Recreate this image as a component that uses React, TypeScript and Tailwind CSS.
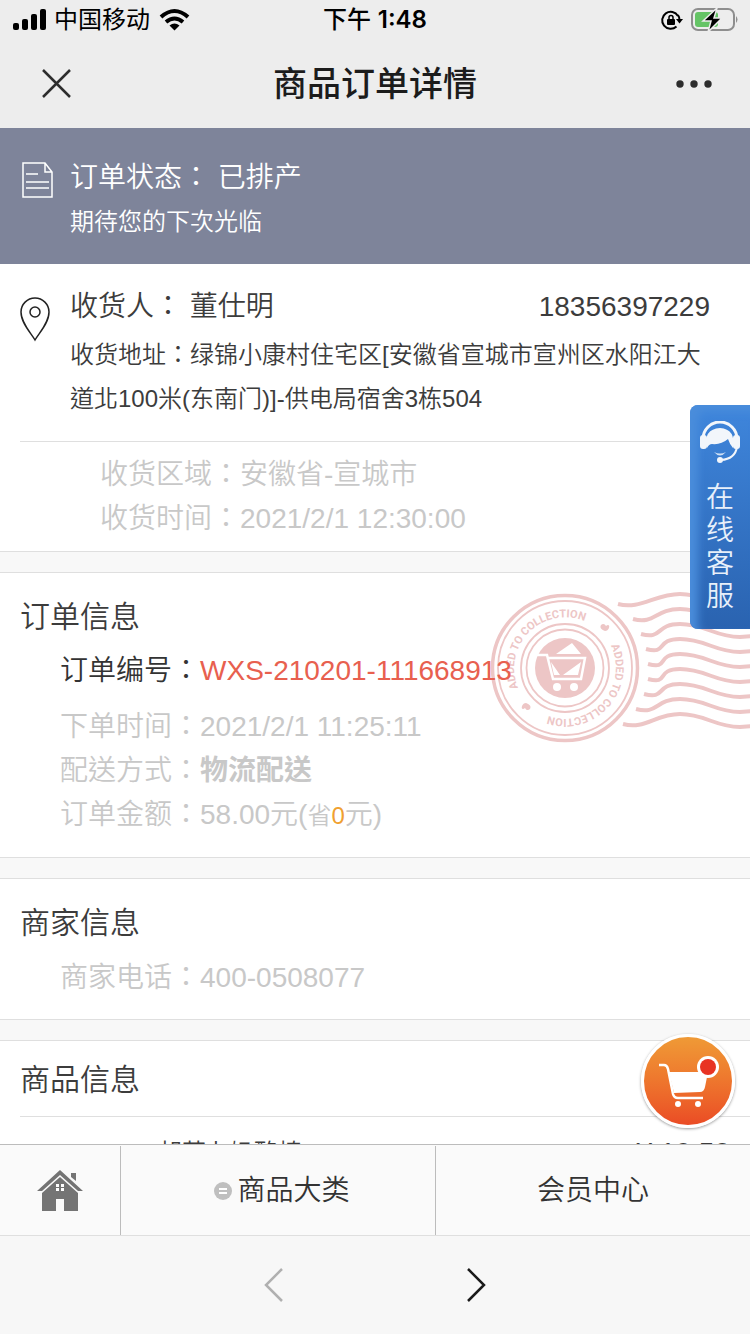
import React from 'react';

type RowProps = {
  label: string;
  children: React.ReactNode;
};

function Row({ label, children }: RowProps) {
  return (
    <div className="flex text-[28px] leading-[44px]">
      <dt>{label}：</dt>
      <dd>{children}</dd>
    </div>
  );
}

function StatusBar() {
  return (
    <div className="grid h-10 grid-cols-3 items-center px-3 text-2xl text-black">
      <div className="flex items-center gap-2">
        <svg width="34" height="22" viewBox="0 0 34 22" aria-hidden="true">
          <rect x="1" y="14" width="6" height="7" rx="2" />
          <rect x="10" y="10" width="6" height="11" rx="2" />
          <rect x="19" y="5" width="6" height="16" rx="2" />
          <rect x="28" y="0" width="6" height="21" rx="2" />
        </svg>
        <span className="whitespace-nowrap">中国移动</span>
        <svg width="32" height="24" viewBox="0 0 32 24" aria-hidden="true">
          <path d="M3 9 Q16.5 -3 30 9" fill="none" stroke="#000" strokeWidth="4" />
          <path d="M8 14 Q16.5 7 25 14" fill="none" stroke="#000" strokeWidth="4" />
          <path d="M16.5 22.5 L11.5 17.5 Q16.5 13.5 21.5 17.5 Z" />
        </svg>
      </div>
      <div className="text-center font-medium">
        下午 <span className="font-['Inter',sans-serif] font-semibold">1:48</span>
      </div>
      <div className="flex items-center justify-end gap-2">
        <svg width="24" height="24" viewBox="0 0 24 24" aria-hidden="true">
          <path d="M19 8 A8.5 8.5 0 1 0 17.5 18.5" fill="none" stroke="#000" strokeWidth="2" />
          <path d="M19 7 Q20.5 9 20.5 12" fill="none" stroke="#000" strokeWidth="2" />
          <path d="M17 11 H24 L20.5 15.5 Z" />
          <rect x="8" y="11" width="8" height="6" rx="1" />
          <path d="M10 11 V9.5 A2 2 0 0 1 14 9.5 V11" fill="none" stroke="#000" strokeWidth="1.5" />
        </svg>
        <svg width="47" height="26" viewBox="0 0 47 26" aria-hidden="true">
          <rect x="1" y="2" width="42" height="21" rx="6" fill="none" stroke="#8e8e8e" strokeWidth="2" />
          <path d="M45 9 Q48 12.5 45 16 Z" fill="#8e8e8e" />
          <rect x="4" y="5" width="23" height="15" rx="3" fill="#65c466" />
          <path d="M26 1 L12 14 H20 L17 25 L31 11 H23 Z" fill="#000" stroke="#ededed" strokeWidth="1.5" />
        </svg>
      </div>
    </div>
  );
}

// left end of each postmark wave, from the top one down
const waves = [128, 143, 151, 156, 158, 158, 154, 146, 133];

function Stamp() {
  return (
    <svg className="absolute top-4 right-0" width="260" height="160" viewBox="0 0 260 160" fill="none" stroke="#edc6c6" aria-hidden="true">
      <circle cx="75" cy="79" r="72.5" strokeWidth="3.5" />
      <circle cx="75" cy="79" r="67" strokeWidth="1.8" />
      <circle cx="75" cy="79" r="44" strokeWidth="1.8" />
      <circle cx="75" cy="79" r="38.5" strokeWidth="1.8" />
      <circle cx="75" cy="79" r="30" fill="#edc6c6" stroke="none" />
      <path d="M44 66 H57 L63 90 H91 L95 69 H58" stroke="#fff" strokeWidth="2.5" />
      <path d="M66 65 L82 54 L91 65 Z M61 73 L70 86 H64 Z M73 86 L91 73 L88 86 Z" fill="#fff" stroke="none" />
      <circle cx="67" cy="98" r="4" fill="#fff" stroke="none" />
      <circle cx="84" cy="98" r="4" fill="#fff" stroke="none" />
      <defs>
        <path id="ring-top" d="M28.1 98.9 A51 51 0 0 1 111 43" />
        <path id="ring-bottom" d="M120.8 56.6 A51 51 0 0 1 39 115" />
      </defs>
      <g fill="#edc6c6" stroke="none" className="font-['Roboto',sans-serif] text-[11px] font-bold">
        <text>
          <textPath href="#ring-top">ADDED TO COLLECTION</textPath>
        </text>
        <text>
          <textPath href="#ring-bottom">ADDED TO COLLECTION</textPath>
        </text>
        <path d="M115 42 C110 40 110 38 111 36 C113 34 115 35 116 37 C118 35 120 36 119 39 C118 41 117 42 115 42 Z" />
        <path d="M36 114 C41 116 41 118 40 120 C38 122 36 121 35 119 C33 121 31 120 32 117 C33 115 34 114 36 114 Z" />
      </g>
      {waves.map((x, i) => {
        const peak = 5 + i * 15;
        return (
          <path
            key={i}
            d={`M${x} ${peak + 10} C${x + 22} ${peak + 16} 165 ${peak} 190 ${peak} C215 ${peak} 225 ${peak + 13} 250 ${peak + 13} L262 ${peak + 12}`}
            strokeWidth="4"
          />
        );
      })}
    </svg>
  );
}

function ServiceTab() {
  return (
    <button
      type="button"
      className="absolute top-[277px] right-0 flex h-56 w-[60px] flex-col items-center rounded-l-lg bg-linear-to-b from-[#3f86dc] to-[#2a63b0] pt-4 text-[28px] leading-[33px] text-[#e8f0fa] shadow-[inset_8px_6px_8px_#4a8ddb]"
    >
      <svg width="42" height="44" viewBox="0 0 42 44" aria-hidden="true">
        <path d="M4 18 A17 17 0 0 1 38 18" fill="none" stroke="#f2f6fb" strokeWidth="3" />
        <rect x="1" y="14" width="7" height="14" rx="3" fill="#f2f6fb" />
        <rect x="34" y="14" width="7" height="14" rx="3" fill="#f2f6fb" />
        <path d="M8 27 Q4 8 21 7 Q37 8 34 27 Q31 24 29 18 Q22 24 13 23 Q10 23 8 27 Z" fill="#f2f6fb" />
        <path d="M38 26 Q36 38 22 39" fill="none" stroke="#f2f6fb" strokeWidth="2" />
        <path d="M15 31 Q21 34 27 31 Q21 38 15 31 Z" fill="#cfe0f5" />
        <circle cx="21" cy="39" r="3" fill="#f2f6fb" />
      </svg>
      <span className="mt-4 w-7">在线客服</span>
    </button>
  );
}

function CartButton() {
  return (
    <button
      type="button"
      aria-label="购物车"
      className="absolute right-[15px] bottom-4 flex h-[94px] w-[94px] items-center justify-center rounded-full border-[3px] border-white bg-linear-to-b from-[#ef9a36] to-[#ea4b25] shadow-[0_1px_3px_rgba(0,0,0,0.4)]"
    >
      <svg width="88" height="88" viewBox="0 0 88 88" className="shrink-0" aria-hidden="true">
        <path d="M15 28 H20 Q23 28 24 32 L29 57 Q30 61 34 61 H59" fill="none" stroke="#fff" strokeWidth="2.5" />
        <path d="M25 35 H64 L61 50 Q60 55 56 55 L30 56 Z" fill="#fff" />
        <circle cx="34" cy="67" r="3" fill="#fff" />
        <circle cx="54" cy="67" r="3" fill="#fff" />
        <circle cx="64" cy="30" r="11" fill="#fff" />
        <circle cx="64" cy="30" r="8" fill="#e83323" />
      </svg>
    </button>
  );
}

export default function App() {
  return (
    <div className="flex h-screen flex-col overflow-hidden bg-[#f8f8f8] font-['Liberation_Sans','Noto_Sans_CJK_TC',sans-serif] font-[350] text-[#3c3c3c]">
      <header className="shrink-0 bg-[#ededed] font-['Liberation_Sans','Noto_Sans_CJK_SC',sans-serif] font-normal">
        <StatusBar />
        <div className="flex h-[88px] items-center justify-between px-9 text-[#1c1c1c]">
          <button type="button" aria-label="关闭">
            <svg width="42" height="42" viewBox="0 0 42 42" fill="none" stroke="#2d2d2d" strokeWidth="2.5" aria-hidden="true">
              <path d="M7 7 L34 34 M34 7 L7 34" />
            </svg>
          </button>
          <h1 className="text-[34px] font-medium">商品订单详情</h1>
          <button type="button" aria-label="更多">
            <svg width="42" height="42" viewBox="0 0 42 42" fill="#2d2d2d" aria-hidden="true">
              <circle cx="8" cy="21" r="3.7" />
              <circle cx="22" cy="21" r="3.7" />
              <circle cx="36" cy="21" r="3.7" />
            </svg>
          </button>
        </div>
      </header>

      <main className="relative min-h-0 flex-1 overflow-hidden">
        <section className="flex bg-[#7e849a] px-5 pt-7 pb-5 text-white">
          <svg className="mt-[6px] w-[50px] shrink-0" width="50" height="36" viewBox="0 0 50 36" fill="none" stroke="#fff" strokeWidth="1.5" aria-hidden="true">
            <path d="M3 1 H25 L32 10 V35 H3 Z M25 1 V10 H32 M6 12 H18 M6 20 H29 M6 26 H29" />
          </svg>
          <div>
            <p className="text-[28px] leading-[44px]">订单状态： 已排产</p>
            <p className="text-2xl leading-[44px]">期待您的下次光临</p>
          </div>
        </section>

        <section className="border-b border-[#dfdfdf] bg-white pl-5">
          <div className="flex border-b border-[#dfdfdf] pt-[21px] pb-5">
            <svg className="mt-[11px] w-[50px] shrink-0" width="50" height="46" viewBox="0 0 50 46" fill="none" stroke="#222" strokeWidth="1.5" aria-hidden="true">
              <path d="M15 44 C11 37 1 27 1 16 A14 14 0 0 1 29 16 C29 27 19 37 15 44 Z" />
              <circle cx="15" cy="16" r="5" />
            </svg>
            <div className="flex-1 pr-10">
              <div className="flex justify-between text-[28px] leading-[44px]">
                <span>收货人： 董仕明</span>
                <span>18356397229</span>
              </div>
              <p className="mt-1 text-2xl leading-[44px]">
                收货地址：绿锦小康村住宅区[安徽省宣城市宣州区水阳江大道北100米(东南门)]-供电局宿舍3栋504
              </p>
            </div>
          </div>
          <dl className="pt-[11px] pb-[10px] pl-20 text-[#c8c8c8]">
            <Row label="收货区域">安徽省-宣城市</Row>
            <Row label="收货时间">2021/2/1 12:30:00</Row>
          </dl>
        </section>

        <section className="relative mt-5 border-y border-[#dfdfdf] bg-white px-5 pt-[22px] pb-5">
          <Stamp />
          <div className="relative">
            <h2 className="text-[30px] leading-[44px]">订单信息</h2>
            <dl className="mt-[10px] pl-10 text-[#c8c8c8]">
              <div className="mb-3 text-[#333]">
                <Row label="订单编号">
                  <span className="text-[#e8604f]">WXS-210201-111668913</span>
                </Row>
              </div>
              <Row label="下单时间">2021/2/1 11:25:11</Row>
              <Row label="配送方式">
                <strong className="font-bold">物流配送</strong>
              </Row>
              <Row label="订单金额">
                58.00元(
                <span className="text-2xl">
                  省<span className="text-[#f0a030]">0</span>
                </span>
                元)
              </Row>
            </dl>
          </div>
        </section>

        <section className="mt-5 border-y border-[#dfdfdf] bg-white px-5 pt-[22px] pb-[19px]">
          <h2 className="text-[30px] leading-[44px]">商家信息</h2>
          <dl className="mt-[11px] pl-10 text-[#c8c8c8]">
            <Row label="商家电话">400-0508077</Row>
          </dl>
        </section>

        <section className="mt-5 border-t border-[#dfdfdf] bg-white pl-5">
          <h2 className="border-b border-[#dfdfdf] pt-[17px] pb-[14px] text-[30px] leading-[44px]">商品信息</h2>
          <div className="flex justify-between pt-5 pr-5 pl-[138px] text-2xl leading-[32px]">
            <span>胡萝卜奶酪棒200</span>
            <span className="text-[28px]">¥ 19.50</span>
          </div>
        </section>

        <ServiceTab />
        <CartButton />
      </main>

      <nav className="flex h-[92px] shrink-0 border-y border-t-[#bcbcbc] border-b-[#dfdfdf] bg-[#fafafa] pt-px text-[28px] text-[#333]">
        <a href="#home" aria-label="首页" className="flex w-[121px] items-center justify-center border-r border-[#bcbcbc]">
          <svg width="48" height="44" viewBox="0 0 48 44" fill="#747474" aria-hidden="true">
            <path d="M24 1 L47 22 H42 L24 6 L6 22 H1 Z M35 4 H40 V12 L35 8 Z" />
            <path d="M24 8 L42 24 V42 H28 V30 H20 V42 H6 V24 Z" />
            <path d="M20 15 H23 V18 H20 Z M25 15 H28 V18 H25 Z M20 19 H23 V22 H20 Z M25 19 H28 V22 H25 Z" fill="#fff" />
          </svg>
        </a>
        <a href="#category" className="flex flex-1 items-center justify-center gap-[5px] border-r border-[#bcbcbc]">
          <svg width="18" height="18" viewBox="0 0 18 18" className="ml-2" aria-hidden="true">
            <circle cx="9" cy="9" r="9" fill="#bfbfbf" />
            <path d="M5 7 H13 M5 11 H13" stroke="#fff" strokeWidth="2" />
          </svg>
          商品大类
        </a>
        <a href="#member" className="flex flex-1 items-center justify-center">会员中心</a>
      </nav>

      <footer className="flex h-[98px] shrink-0 items-center justify-center gap-[182px] bg-[#f7f7f7]">
        <button type="button" aria-label="后退">
          <svg width="20" height="34" viewBox="0 0 20 34" fill="none" stroke="#b0b0b0" strokeWidth="2.5" aria-hidden="true">
            <path d="M18 1 L2 17 L18 33" />
          </svg>
        </button>
        <button type="button" aria-label="前进">
          <svg width="20" height="34" viewBox="0 0 20 34" fill="none" stroke="#1a1a1a" strokeWidth="2.5" aria-hidden="true">
            <path d="M2 1 L18 17 L2 33" />
          </svg>
        </button>
      </footer>
    </div>
  );
}
